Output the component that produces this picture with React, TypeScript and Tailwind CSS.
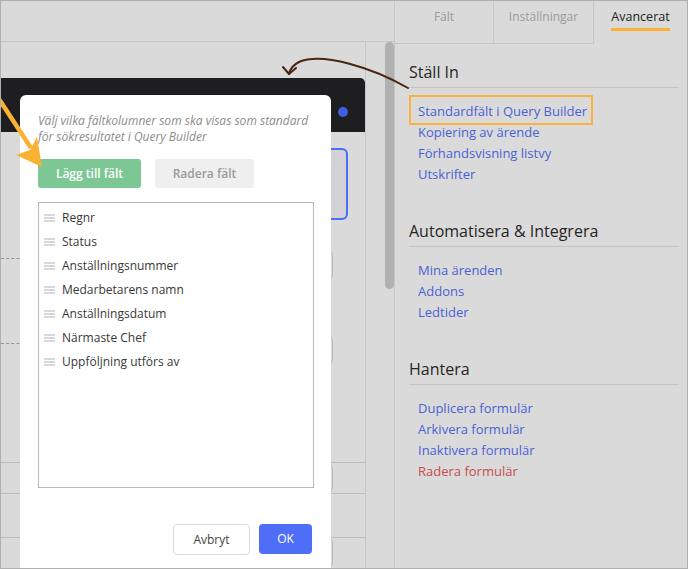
const FIELDS = [
  "Regnr",
  "Status",
  "Anställningsnummer",
  "Medarbetarens namn",
  "Anställningsdatum",
  "Närmaste Chef",
  "Uppföljning utförs av",
];

type LinkItem = { label: string; marked?: boolean; danger?: boolean };

const SECTIONS: { title: string; links: LinkItem[] }[] = [
  {
    title: "Ställ In",
    links: [
      { label: "Standardfält i Query Builder", marked: true },
      { label: "Kopiering av ärende" },
      { label: "Förhandsvisning listvy" },
      { label: "Utskrifter" },
    ],
  },
  {
    title: "Automatisera & Integrera",
    links: [{ label: "Mina ärenden" }, { label: "Addons" }, { label: "Ledtider" }],
  },
  {
    title: "Hantera",
    links: [
      { label: "Duplicera formulär" },
      { label: "Arkivera formulär" },
      { label: "Inaktivera formulär" },
      { label: "Radera formulär", danger: true },
    ],
  },
];

function Handle() {
  return (
    <svg width="11" height="8" viewBox="0 0 11 8" className="shrink-0">
      <path d="M0 1h11M0 4h11M0 7h11" stroke="#b3b3b3" strokeWidth="1.2" />
    </svg>
  );
}

function BackgroundEditor() {
  return (
    <div className="flex w-[394px] flex-col border-r border-[#c5c5c5]">
      <div className="h-[43px] border-b border-[#c5c5c5]" />
      <div className="flex flex-1">
        <div className="flex w-[365px] flex-col border-r border-[#c5c5c5]">
          <div className="mt-[36px] h-[54px] rounded-tr-[5px] bg-[#1e1e20]" />
          <div className="mt-[16px] ml-[200px] mr-[17px] h-[72px] rounded-[6px] border-2 border-[#4a6cf7] bg-[#d3d3d7]" />
          <div className="mt-[30px] flex h-[30px] items-start">
            <div className="mt-[8px] w-[80px] border-t border-dashed border-[#949494]" />
            <div className="ml-auto mr-[32px] h-[30px] w-[140px] rounded-[5px] border border-[#bcbcbc]" />
          </div>
          <div className="mt-[55px] flex h-[30px] items-start">
            <div className="mt-[8px] w-[80px] border-t border-dashed border-[#949494]" />
            <div className="ml-auto mr-[32px] h-[30px] w-[140px] rounded-[5px] border border-[#bcbcbc]" />
          </div>
          <div className="mt-[97px] flex h-[32px] border-y border-[#bcbcbc]">
            <div className="ml-auto mr-[32px] h-[30px] w-[140px] rounded-[5px] border border-[#bcbcbc]" />
          </div>
          <div className="h-[44px] border-b border-[#bcbcbc]" />
          <div className="flex">
            <div className="ml-auto mr-[32px] h-[30px] w-[140px] rounded-[5px] border border-[#bcbcbc]" />
          </div>
        </div>
        <div className="flex flex-1 justify-end">
          <div className="h-[247px] w-[9px] rounded-full bg-[#b1b1b1]" />
        </div>
      </div>
    </div>
  );
}

function SettingsPanel() {
  return (
    <div className="flex flex-1 flex-col">
      <div className="flex h-[43px] text-[12px] leading-[18px]">
        <div className="w-[99px] border-r border-b border-[#c5c5c5] pt-[7px] text-center text-[#9b9b9b]">Fält</div>
        <div className="w-[100px] border-r border-b border-[#c5c5c5] pt-[7px] text-center text-[#9b9b9b]">Inställningar</div>
        <div className="flex flex-1 justify-center pt-[7px]">
          <span className="h-fit border-b-[3px] border-[#f9b233] pb-[2px] text-[12.5px] text-[#222]">Avancerat</span>
        </div>
      </div>

      <div className="pt-[16px] pr-[8px] pl-[14px]">
        {SECTIONS.map((section, i) => (
          <div key={section.title} className={i > 0 ? "mt-[34px]" : ""}>
            <h2 className="border-b border-[#c3c3c3] pb-[3px] text-[16px] leading-[24px] text-[#262626]">
              {section.title}
            </h2>
            <div className="mt-[13px] flex flex-col items-start pl-[9px] text-[13px] leading-[21px]">
              {section.links.map((link) => (
                <span
                  key={link.label}
                  className={`relative ${link.danger ? "text-[#c84b51]" : "text-[#4a62d6]"}`}
                >
                  {link.label}
                  {link.marked && (
                    <span className="absolute -top-[6px] -right-[6px] -bottom-[3px] -left-[9px] border-2 border-[#fbb040]" />
                  )}
                </span>
              ))}
            </div>
          </div>
        ))}
      </div>
    </div>
  );
}

function FieldsModal() {
  return (
    <div className="absolute top-[94px] left-[19px] h-[480px] w-[311px] rounded-t-[6px] bg-white pt-[18px] pr-[17px] pl-[18px]">
      <p className="text-[12px] leading-[16px] text-[#8c8c8c] italic">
        Välj vilka fältkolumner som ska visas som standard för sökresultatet i Query Builder
      </p>
      <div className="mt-[14px] flex gap-[14px] text-[12px] font-semibold">
        <button className="h-[29px] w-[103px] rounded-[3px] bg-[#7dc795] text-white">Lägg till fält</button>
        <button className="h-[29px] w-[99px] rounded-[3px] bg-[#efefef] text-[#9b9b9b]">Radera fält</button>
      </div>
      <div className="mt-[14px] h-[286px] border border-[#b8b8b8] pt-[3px] pl-[5px]">
        {FIELDS.map((f) => (
          <div key={f} className="flex h-[24px] items-center gap-[7px] text-[12px] text-[#383838]">
            <Handle />
            {f}
          </div>
        ))}
      </div>
      <div className="mt-[36px] flex justify-end gap-[9px] pr-[2px] text-[12px]">
        <button className="h-[31px] w-[77px] rounded-[4px] border border-[#dadada] bg-white text-[#444]">Avbryt</button>
        <button className="h-[30px] w-[53px] rounded-[4px] bg-[#4f6ef7] text-white">OK</button>
      </div>
    </div>
  );
}

export default function App() {
  return (
    <div className="relative flex h-[569px] w-[688px] overflow-hidden border border-[#b0b0b0] bg-[#dadada] font-['Open_Sans',sans-serif]">
      <BackgroundEditor />
      <SettingsPanel />

      <div className="absolute top-[106px] left-[337px] h-[10px] w-[10px] rounded-full bg-[#3d5ee0]" />
      <FieldsModal />

      <svg className="pointer-events-none absolute inset-0" width="688" height="569" viewBox="0 0 688 569">
        <path d="M-2 98 L30 147" stroke="#f9b233" strokeWidth="4.5" />
        <path d="M41 166 L15 154 L29 149 L36 136 Z" fill="#f9b233" />
        <path
          d="M407 87 C372 67 322 51 298 61 C292 64 289 68 288 73"
          fill="none"
          stroke="#4a2511"
          strokeWidth="2"
          strokeLinecap="round"
        />
        <path d="M282 66 L288 73 L295 67" fill="none" stroke="#4a2511" strokeWidth="2" strokeLinecap="round" strokeLinejoin="round" />
      </svg>
    </div>
  );
}
